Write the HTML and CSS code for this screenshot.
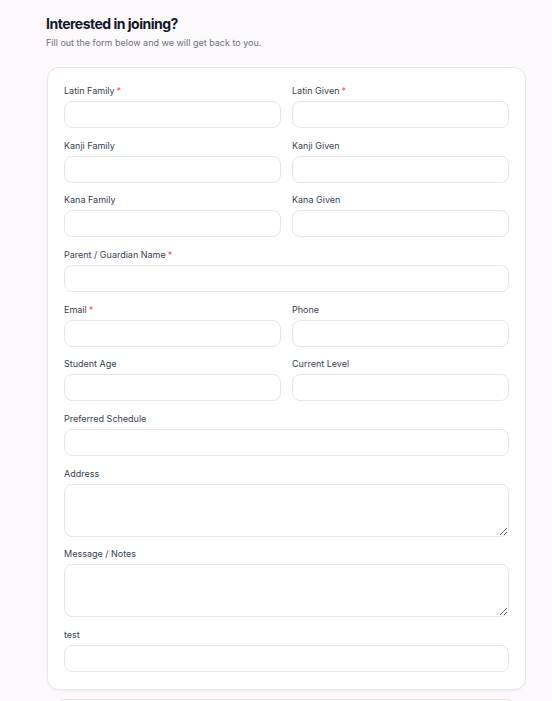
FILE: index.html
```html
<!DOCTYPE html>
<html lang="en">
<head>
    <meta charset="UTF-8">
    <meta name="viewport" content="width=device-width, initial-scale=1.0">
    <title>Interested in joining?</title>
    <link rel="stylesheet" href="styles.css">
</head>
<body>

<div class="join-page">
    <h1>Interested in joining?</h1>
    <p class="intro">Fill out the form below and we will get back to you.</p>

    <form class="join-card">
        <div class="row">
            <div class="field">
                <label>Latin Family<span class="req">*</span></label>
                <input type="text">
            </div>
            <div class="field">
                <label>Latin Given<span class="req">*</span></label>
                <input type="text">
            </div>
        </div>
        <div class="row">
            <div class="field">
                <label>Kanji Family</label>
                <input type="text">
            </div>
            <div class="field">
                <label>Kanji Given</label>
                <input type="text">
            </div>
        </div>
        <div class="row">
            <div class="field">
                <label>Kana Family</label>
                <input type="text">
            </div>
            <div class="field">
                <label>Kana Given</label>
                <input type="text">
            </div>
        </div>
        <div class="field">
            <label>Parent / Guardian Name<span class="req">*</span></label>
            <input type="text">
        </div>
        <div class="row">
            <div class="field">
                <label>Email<span class="req">*</span></label>
                <input type="email">
            </div>
            <div class="field">
                <label>Phone</label>
                <input type="tel">
            </div>
        </div>
        <div class="row">
            <div class="field">
                <label>Student Age</label>
                <input type="text">
            </div>
            <div class="field">
                <label>Current Level</label>
                <input type="text">
            </div>
        </div>
        <div class="field">
            <label>Preferred Schedule</label>
            <input type="text">
        </div>
        <div class="field">
            <label>Address</label>
            <textarea></textarea>
        </div>
        <div class="field">
            <label>Message / Notes</label>
            <textarea></textarea>
        </div>
        <div class="field">
            <label>test</label>
            <input type="text">
        </div>
    </form>

    <div class="next-card"></div>
</div>

</body>
</html>
```

FILE: styles.css
```css
body {
    margin: 0;
    font-family: Inter, "Noto Sans", sans-serif;
    background-color: #fdf8fc;
    color: #111827;
}
.join-page {
    width: 479px;
    padding: 13px 0 0 47px;
}
.join-page h1 {
    margin: 0 0 0 -1px;
    font-size: 14px;
    font-weight: 700;
    line-height: 22px;
    letter-spacing: -0.5px;
}
.intro {
    margin: 2px 0 0 -1px;
    font-size: 9px;
    line-height: 12px;
    color: #6b7280;
}
.join-card {
    margin-top: 18px;
    background-color: #ffffff;
    border: 1px solid #e5e7eb;
    border-radius: 12px;
    box-shadow: 0 1px 2px rgba(0, 0, 0, 0.05);
    padding: 17px 16px 17px 16px;
    display: flex;
    flex-direction: column;
    gap: 11.67px;
}
.row {
    display: flex;
    gap: 11px;
}
.row .field {
    flex: 1;
}
.field {
    display: flex;
    flex-direction: column;
    gap: 4px;
}
.field label {
    font-size: 9px;
    line-height: 12px;
    font-weight: 400;
    color: #374151;
}
.req {
    color: #ef4444;
    margin-left: 2px;
}
.field input,
.field textarea {
    box-sizing: border-box;
    width: 100%;
    margin: 0;
    border: 1px solid #e5e7eb;
    border-radius: 8px;
    background-color: #ffffff;
    font-family: inherit;
    font-size: 10px;
}
.field input {
    height: 27px;
}
.field textarea {
    height: 53px;
    resize: vertical;
}
.next-card {
    margin: 9px 8px 0 7px;
    height: 20px;
    background-color: #ffffff;
    border: 1px solid #e5e7eb;
    border-radius: 12px 12px 0 0;
}
```
